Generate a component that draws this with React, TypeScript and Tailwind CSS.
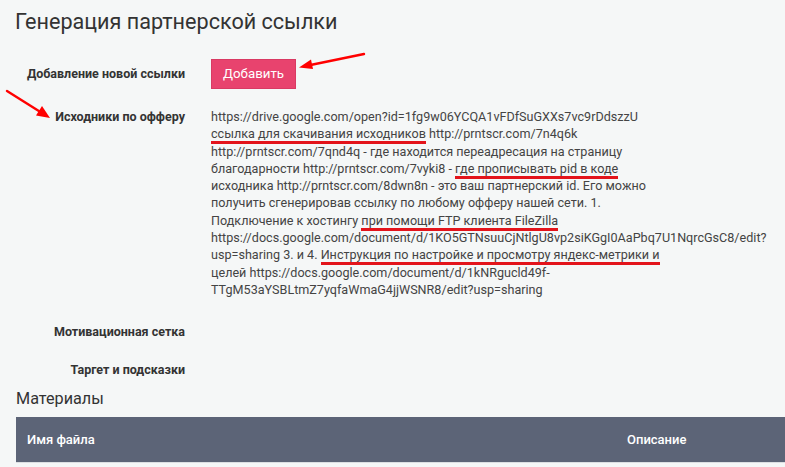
import React from 'react';

const Mark = ({ children }: { children: React.ReactNode }) => (
  <span className="border-b-[3px] border-[#e3141b]">{children}</span>
);

const Arrows = () => (
  <svg className="pointer-events-none absolute left-0 top-0" width="785" height="467">
    <line x1="364" y1="54" x2="308" y2="65.5" stroke="#f00" strokeWidth="2.4" strokeLinecap="round" />
    <polygon points="299,67.5 311,59.5 313,69" fill="#f00" />
    <line x1="7" y1="91" x2="42" y2="113" stroke="#f00" strokeWidth="2.4" strokeLinecap="round" />
    <polygon points="50,118 36,115.5 42,106" fill="#f00" />
  </svg>
);

const sourceLines: React.ReactNode[] = [
  'https://drive.google.com/open?id=1fg9w06YCQA1vFDfSuGXXs7vc9rDdszzU',
  <>
    <Mark>ссылка для скачивания исходников</Mark> http://prntscr.com/7n4q6k
  </>,
  'http://prntscr.com/7qnd4q - где находится переадресация на страницу',
  <>
    благодарности http://prntscr.com/7vyki8 - <Mark>где прописывать pid в коде</Mark>
  </>,
  'исходника http://prntscr.com/8dwn8n - это ваш партнерский id. Его можно',
  'получить сгенерировав ссылку по любому офферу нашей сети. 1.',
  <>
    Подключение к хостингу <Mark>при помощи FTP клиента FileZilla</Mark>
  </>,
  'https://docs.google.com/document/d/1KO5GTNsuuCjNtlgU8vp2siKGgI0AaPbq7U1NqrcGsC8/edit?',
  <>
    usp=sharing 3. и 4. <Mark>Инструкция по настройке и просмотру яндекс-метрики и</Mark>
  </>,
  'целей https://docs.google.com/document/d/1kNRgucld49f-',
  'TTgM53aYSBLtmZ7yqfaWmaG4jjWSNR8/edit?usp=sharing',
];

const Label = ({ children }: { children: React.ReactNode }) => (
  <div className="w-[169px] shrink-0 text-right text-[12.5px] font-bold leading-[17.3px] text-[#333]">
    {children}
  </div>
);

export default function App() {
  return (
    <div
      className="relative min-h-screen overflow-hidden bg-[#f5f7f7] pl-4"
      style={{ fontFamily: 'Roboto, "Noto Sans", sans-serif' }}
    >
      <h1 className="pt-[7px] text-[21.6px] font-normal leading-[29px] text-[#333] -ml-[1px]">
        Генерация партнерской ссылки
      </h1>

      <div className="mt-[23px] flex items-center gap-[26px]">
        <Label>Добавление новой ссылки</Label>
        <button className="h-[30px] border border-[#d93a63] bg-[#e8436e] px-[11px] text-[13.3px] text-white">
          Добавить
        </button>
      </div>

      <div className="mt-[19px] flex items-start gap-[26px]">
        <Label>Исходники по офферу</Label>
        <div className="text-[12.6px] leading-[17.3px] text-[#444]">
          {sourceLines.map((line, i) => (
            <div key={i} className="whitespace-nowrap">
              {line}
            </div>
          ))}
        </div>
      </div>

      <div className="mt-[25px] flex gap-[26px]">
        <Label>Мотивационная сетка</Label>
      </div>

      <div className="mt-[20px] flex gap-[26px]">
        <Label>Таргет и подсказки</Label>
      </div>

      <h2 className="mt-[10px] text-[16.2px] font-normal leading-[22px] text-[#333]">Материалы</h2>

      <div className="mt-[7px] flex h-[46px] items-center border-b border-[#dcdfe2] bg-[#5c6477] text-[13px] font-medium text-white">
        <div className="w-[611px] pl-[11px]">Имя файла</div>
        <div>Описание</div>
      </div>

      <Arrows />
    </div>
  );
}
